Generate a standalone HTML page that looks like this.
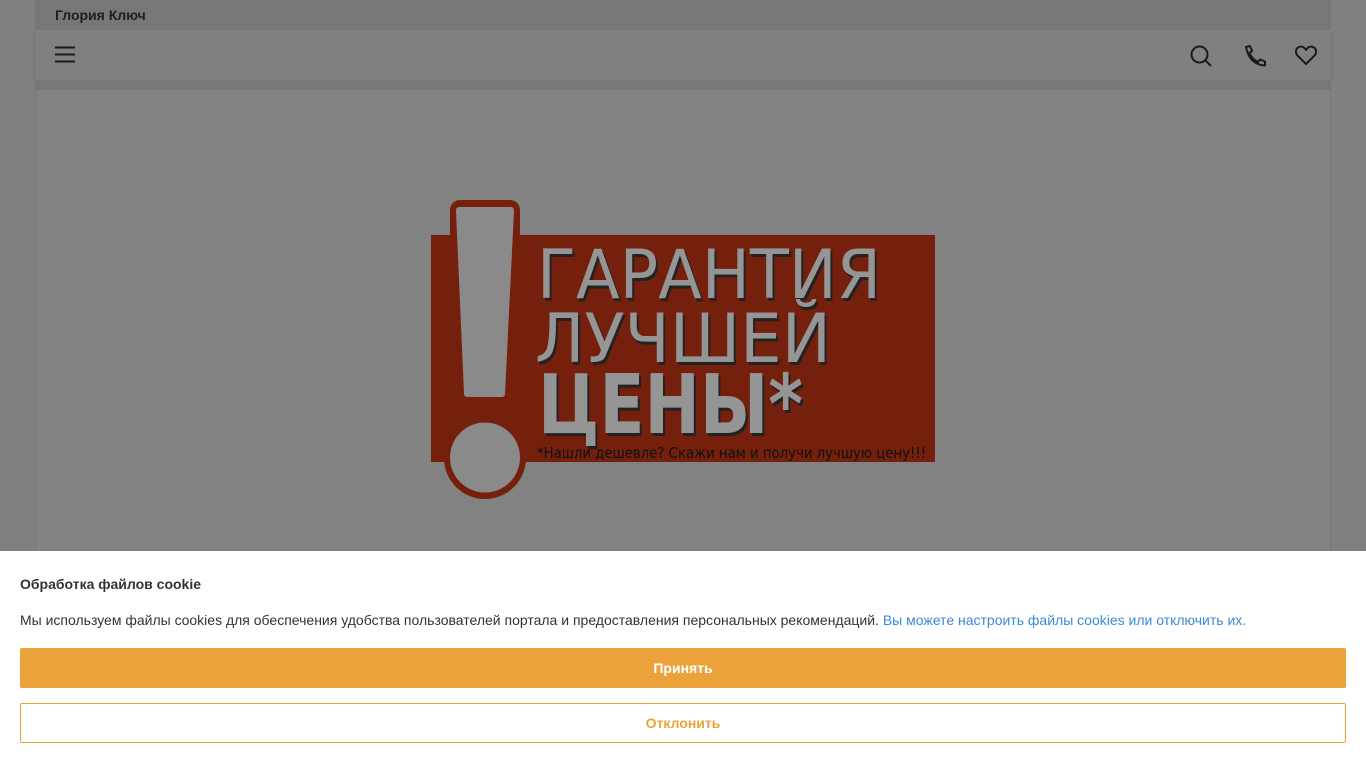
<!DOCTYPE html>
<html><head><meta charset="utf-8"><style>
*{margin:0;padding:0;box-sizing:border-box}
body{width:1366px;height:768px;overflow:hidden;background:#808080;font-family:"Liberation Sans",sans-serif;position:relative}
.top{position:absolute;left:35px;top:0;width:1296px;height:30px;background:#777;}
.top span{position:absolute;left:20px;top:7px;font-size:14px;font-weight:bold;color:#1e1e1e}
.nav{position:absolute;left:35px;top:30px;width:1296px;height:50px;background:#808080;box-shadow:0 2px 3px rgba(0,0,0,.2)}
.gap{position:absolute;left:35px;top:80px;width:1296px;height:10px;background:#777}
.content{position:absolute;left:35px;top:90px;width:1296px;height:470px;background:#828282;border-left:1px solid #7a7a7a;border-right:1px solid #7a7a7a}
.cookie{position:absolute;left:0;top:551px;width:1366px;height:217px;background:#fff}
.cookie h4{position:absolute;left:20px;top:25px;font-size:14px;color:#333}
.cookie p{position:absolute;left:20px;top:61px;font-size:14px;color:#333}
.cookie p a{color:#3a8ad8;text-decoration:none}
.btn1{position:absolute;left:20px;top:97px;width:1326px;height:40px;background:#eca23a;border-radius:2px;color:#fff;font-weight:bold;font-size:14px;text-align:center;line-height:40px}
.btn2{position:absolute;left:20px;top:152px;width:1326px;height:40px;border:1px solid #eca23a;border-radius:2px;color:#eca23a;font-weight:bold;font-size:14px;text-align:center;line-height:38px}
</style></head><body>
<div class="top"><span>Глория Ключ</span></div>
<div class="nav">
<svg style="position:absolute;left:20px;top:15px" width="20" height="20" viewBox="0 0 20 20"><path d="M0 2.5H20M0 9.5H20M0 16.5H20" stroke="#1a1a1a" stroke-width="2"/></svg>
<svg style="position:absolute;left:1154px;top:14px" width="24" height="24" viewBox="0 0 24 24" fill="none" stroke="#1a1a1a" stroke-width="2"><circle cx="10.5" cy="10.5" r="8"/><path d="M16.5 16.5L22 22"/></svg>
<svg style="position:absolute;left:1209px;top:14px" width="24" height="24" viewBox="0 0 24 24" fill="none" stroke="#1a1a1a" stroke-width="2" stroke-linejoin="round"><path d="M2 3L6 2L8 7L5.5 9C7 13 10 16 14 18L16 15.5L21 17.5V21.5L17 21C9 19 4 13 2 3Z"/></svg>
<svg style="position:absolute;left:1259px;top:13px" width="24" height="24" viewBox="0 0 24 24" fill="none" stroke="#1a1a1a" stroke-width="2" stroke-linejoin="round"><path d="M12 21L3.5 12.5C1 10 1.5 5 5.5 3.8C8 3 10.5 4.5 12 7C13.5 4.5 16 3 18.5 3.8C22.5 5 23 10 20.5 12.5Z"/></svg>
</div>
<div class="gap"></div>
<div class="content"></div>
<svg style="position:absolute;left:0;top:0" width="1366" height="551">
<rect x="431" y="235" width="504" height="227" fill="#74200c"/>
<rect x="450" y="200" width="70" height="205" rx="10" fill="#74200c"/>
<path d="M459 207H511Q514 207 514 211L505 394Q505 397 501 397H468Q464 397 464 394L456 211Q456 207 459 207Z" fill="#8a8a8a"/>
<circle cx="485" cy="458" r="41" fill="#74200c"/>
<circle cx="485" cy="457.5" r="35" fill="#8a8a8a"/>
<g font-family="DejaVu Sans, sans-serif" fill="#222" transform="translate(2,3)">
<text x="537" y="298" font-size="68" textLength="344" lengthAdjust="spacingAndGlyphs">ГАРАНТИЯ</text>
<text x="535" y="362" font-size="68" textLength="296" lengthAdjust="spacingAndGlyphs">ЛУЧШЕЙ</text>
<text x="538" y="433" font-size="82" font-weight="bold" textLength="265" lengthAdjust="spacingAndGlyphs">ЦЕНЫ*</text>
</g>
<g font-family="DejaVu Sans, sans-serif" fill="#959595">
<text x="537" y="298" font-size="68" textLength="344" lengthAdjust="spacingAndGlyphs">ГАРАНТИЯ</text>
<text x="535" y="362" font-size="68" textLength="296" lengthAdjust="spacingAndGlyphs">ЛУЧШЕЙ</text>
<text x="538" y="433" font-size="82" font-weight="bold" textLength="265" lengthAdjust="spacingAndGlyphs">ЦЕНЫ*</text>
</g>
<text x="537" y="458" font-family="DejaVu Sans, sans-serif" font-size="15" fill="#111" textLength="389" lengthAdjust="spacingAndGlyphs">*Нашли дешевле? Скажи нам и получи лучшую цену!!!</text>
</svg>
<div class="cookie">
<h4>Обработка файлов cookie</h4>
<p>Мы используем файлы cookies для обеспечения удобства пользователей портала и предоставления персональных рекомендаций. <a>Вы можете настроить файлы cookies или отключить их.</a></p>
<div class="btn1">Принять</div>
<div class="btn2">Отклонить</div>
</div>
</body></html>
